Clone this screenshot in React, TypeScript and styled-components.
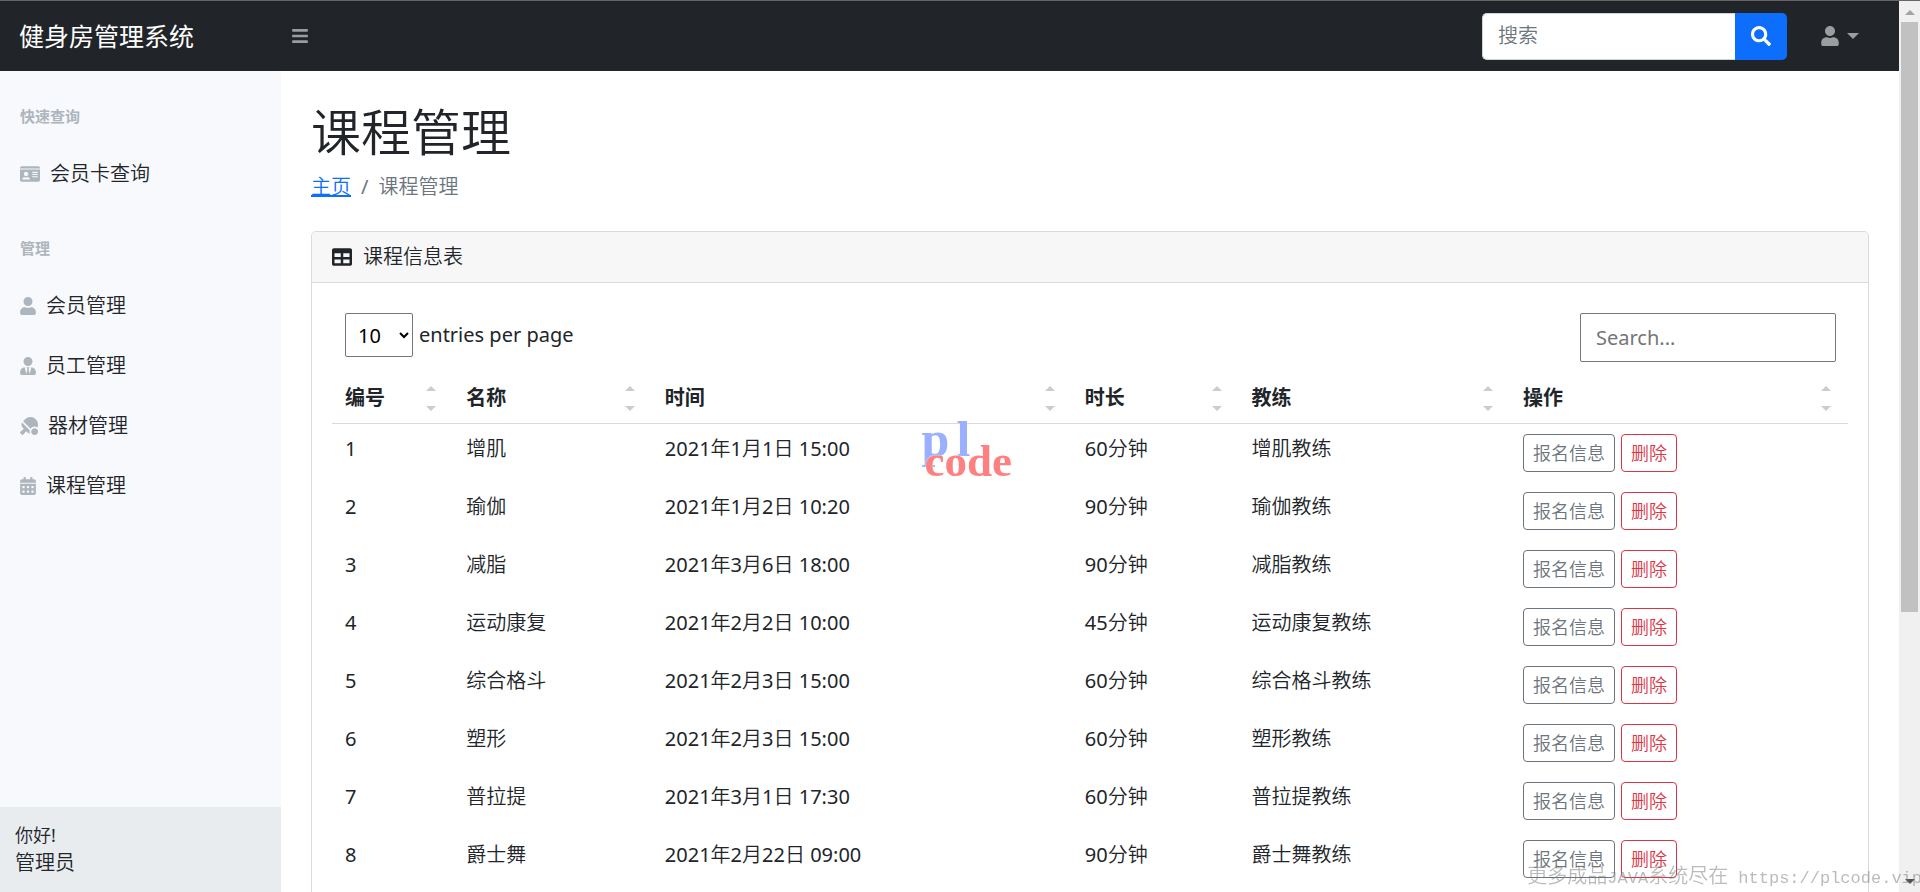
import React from 'react';
import styled, { createGlobalStyle, css } from 'styled-components';
import { FaBars, FaCalendarAlt, FaIdCard, FaSearch, FaTable, FaTableTennis, FaUser, FaUserTie } from 'react-icons/fa';

const GlobalStyle = createGlobalStyle`
  *, *::before, *::after { box-sizing: border-box; }
  body {
    margin: 0;
    background: #fff;
    color: #212529;
    font-family: "Noto Sans", "Noto Sans CJK SC DemiLight", "Noto Sans CJK SC", sans-serif;
    font-size: 20px;
    line-height: 30px;
  }
  button, input, select { font: inherit; }
`;

const Window = styled.div`
  display: flex;
  height: 100vh;
  overflow: hidden;
  border-top: 1px solid #666;
`;

const Page = styled.div`
  flex: 1;
  min-width: 0;
  display: flex;
  flex-direction: column;
`;

const TopNav = styled.header`
  display: flex;
  align-items: center;
  flex: none;
  height: 70px;
  background: #212529;
`;

const Brand = styled.a`
  width: 282px;
  padding-left: 19px;
  color: #fff;
  font-family: "Noto Sans", "Noto Sans CJK SC", sans-serif;
  font-size: 25px;
  text-decoration: none;
`;

const Icon = styled.span<{ $w: number; $h: number }>`
  display: inline-flex;
  flex: none;
  svg {
    display: block;
    width: ${(p) => p.$w}px;
    height: ${(p) => p.$h}px;
  }
`;

const NavButton = styled.button`
  display: flex;
  align-items: center;
  gap: 8px;
  padding: 10px;
  border: 0;
  background: none;
  color: #9b9d9f;
`;

const NavSearch = styled.form`
  display: flex;
  height: 47px;
  margin-left: auto;
  margin-right: 24px;
`;

const NavInput = styled.input`
  width: 253px;
  padding: 0 15px;
  border: 1px solid #ced4da;
  border-right: 0;
  border-radius: 5px 0 0 5px;
  &::placeholder { color: #6c757d; opacity: 1; }
`;

const NavSubmit = styled.button`
  display: flex;
  align-items: center;
  padding: 0 16px;
  border: 0;
  border-radius: 0 5px 5px 0;
  background: #0d6efd;
  color: #fff;
`;

const UserMenu = styled.div`
  margin-right: 30px;
`;

const Arrow = styled.span<{ $dir: 'up' | 'down'; $size?: number; $color: string }>`
  width: 0;
  height: 0;
  border: ${(p) => p.$size ?? 5}px solid transparent;
  ${(p) =>
    p.$dir === 'up'
      ? css`border-top: 0; border-bottom-color: ${p.$color};`
      : css`border-bottom: 0; border-top-color: ${p.$color};`}
`;

const Body = styled.div`
  display: flex;
  flex: 1;
  min-height: 0;
`;

const Sidebar = styled.aside`
  display: flex;
  flex-direction: column;
  width: 281px;
  flex: none;
  background: #f8f9fc;
`;

const SideNav = styled.nav`
  flex: 1;
`;

const SideHeading = styled.div`
  padding: 34px 20px 16px;
  color: #adb5bd;
  font-family: "Noto Sans", "Noto Sans CJK SC", sans-serif;
  font-size: 15px;
  font-weight: 700;
  line-height: 22px;
`;

const SideLink = styled.a`
  display: flex;
  align-items: center;
  gap: 10px;
  padding: 16px 20px 14px;
  color: #212529;
  text-decoration: none;
  ${Icon} { color: #adb5bd; }
`;

const SideFooter = styled.div`
  padding: 15px 15px 14px;
  background: #e9ecef;
`;

const Greeting = styled.div`
  font-size: 18px;
  line-height: 26px;
`;

const Main = styled.main`
  flex: 1;
  min-width: 0;
  overflow: hidden;
  padding: 31px 30px;
`;

const Title = styled.h1`
  margin: 0;
  font-size: 50px;
  font-weight: 400;
  line-height: 60px;
`;

const Breadcrumb = styled.ol`
  display: flex;
  gap: 10px;
  margin: 10px 0 29px;
  padding: 0;
  list-style: none;
  color: #6c757d;
  a { color: #0d6efd; }
`;

const Card = styled.section`
  border: 1px solid #dbdbdb;
  border-radius: 5px;
`;

const CardHeader = styled.div`
  display: flex;
  align-items: center;
  gap: 11px;
  padding: 10px 20px;
  border-bottom: 1px solid #dbdbdb;
  border-radius: 5px 5px 0 0;
  background: #f7f7f7;
`;

const CardBody = styled.div`
  padding: 20px;
`;

const TableTop = styled.div`
  display: flex;
  justify-content: space-between;
  align-items: flex-start;
  padding: 10px 12px 10px 13px;
`;

const PerPage = styled.label`
  display: flex;
  align-items: center;
  gap: 6px;
`;

const PerPageSelect = styled.select`
  width: 68px;
  height: 44px;
  padding: 0 8px;
  border: 1px solid #767676;
  border-radius: 2px;
  background: #fff;
  color: #000;
`;

const TableSearch = styled.input`
  width: 256px;
  height: 49px;
  padding: 0 15px;
  border: 1px solid #767676;
  border-radius: 2px;
  &::placeholder { color: #757575; opacity: 1; }
`;

const Table = styled.table`
  width: 100%;
  table-layout: fixed;
  border-collapse: collapse;
`;

const HeadCell = styled.th<{ $width: string }>`
  width: ${(p) => p.$width};
  padding: 11px 17px 10px 13px;
  border-bottom: 1px solid #dbdbdb;
`;

const SortButton = styled.button`
  display: flex;
  align-items: center;
  justify-content: space-between;
  width: 100%;
  padding: 0;
  border: 0;
  background: none;
  color: inherit;
  font-family: "Noto Sans", "Noto Sans CJK SC", sans-serif;
  font-weight: 700;
`;

const SortArrows = styled.span`
  display: flex;
  flex-direction: column;
  gap: 15px;
`;

const Cell = styled.td`
  padding: 10px 13px;
  vertical-align: top;
`;

const Actions = styled.div`
  display: flex;
  gap: 6px;
`;

const ActionButton = styled.button<{ $color: string }>`
  height: 38px;
  padding: 0 9px;
  border: 1px solid ${(p) => p.$color};
  border-radius: 4px;
  background: #fff;
  color: ${(p) => p.$color};
  font-size: 18px;
  line-height: 26px;
`;

const ScrollTrack = styled.div`
  display: flex;
  flex-direction: column;
  align-items: center;
  justify-content: space-between;
  flex: none;
  width: 21px;
  padding: 9px 2px 8px;
  background: #f0f0f0;
`;

const ScrollThumb = styled.div`
  width: 17px;
  height: 67.5%;
  margin: 7px 0 auto;
  background: #c1c1c1;
`;

const LogoMark = styled.div`
  position: fixed;
  top: 411px;
  left: 48%;
  pointer-events: none;
  font-family: "Liberation Serif", serif;
  font-weight: 700;
`;

const LogoTop = styled.div`
  display: flex;
  gap: 7px;
  color: #9ab0ff;
  font-size: 50px;
  line-height: 56px;
`;

const LogoBottom = styled.div`
  margin: -26px 0 0 3px;
  color: #ff8080;
  font-size: 45px;
  line-height: 40px;
  text-shadow: 0 0 2px #fff;
`;

const SiteMark = styled.div`
  position: fixed;
  right: -2px;
  bottom: -2px;
  color: rgba(120, 120, 120, 0.5);
  line-height: 30px;
  white-space: pre;
  pointer-events: none;
`;

const Mono = styled.span`
  font-family: "Liberation Mono", monospace;
  font-size: 17px;
`;

const manageLinks = [
  { label: '会员管理', icon: <FaUser />, w: 16 },
  { label: '员工管理', icon: <FaUserTie />, w: 16 },
  { label: '器材管理', icon: <FaTableTennis />, w: 18 },
  { label: '课程管理', icon: <FaCalendarAlt />, w: 16 },
];

const columns = [
  { label: '编号', width: '8%' },
  { label: '名称', width: '13.1%' },
  { label: '时间', width: '27.7%' },
  { label: '时长', width: '11%' },
  { label: '教练', width: '17.9%' },
  { label: '操作', width: '22.3%' },
];

const courses = [
  ['1', '增肌', '2021年1月1日 15:00', '60分钟', '增肌教练'],
  ['2', '瑜伽', '2021年1月2日 10:20', '90分钟', '瑜伽教练'],
  ['3', '减脂', '2021年3月6日 18:00', '90分钟', '减脂教练'],
  ['4', '运动康复', '2021年2月2日 10:00', '45分钟', '运动康复教练'],
  ['5', '综合格斗', '2021年2月3日 15:00', '60分钟', '综合格斗教练'],
  ['6', '塑形', '2021年2月3日 15:00', '60分钟', '塑形教练'],
  ['7', '普拉提', '2021年3月1日 17:30', '60分钟', '普拉提教练'],
  ['8', '爵士舞', '2021年2月22日 09:00', '90分钟', '爵士舞教练'],
];

export default function App() {
  return (
    <>
      <GlobalStyle />
      <Window>
        <Page>
          <TopNav>
            <Brand href="#">健身房管理系统</Brand>
            <NavButton type="button" aria-label="切换侧栏">
              <Icon $w={16} $h={18}><FaBars /></Icon>
            </NavButton>
            <NavSearch onSubmit={(e) => e.preventDefault()}>
              <NavInput type="text" placeholder="搜索" aria-label="搜索" />
              <NavSubmit type="submit" aria-label="提交搜索">
                <Icon $w={20} $h={20}><FaSearch /></Icon>
              </NavSubmit>
            </NavSearch>
            <UserMenu>
              <NavButton type="button" aria-label="用户菜单">
                <Icon $w={18} $h={20}><FaUser /></Icon>
                <Arrow $dir="down" $size={6} $color="#9b9d9f" />
              </NavButton>
            </UserMenu>
          </TopNav>
          <Body>
            <Sidebar>
              <SideNav>
                <SideHeading>快速查询</SideHeading>
                <SideLink href="#card">
                  <Icon $w={20} $h={18}><FaIdCard /></Icon>
                  会员卡查询
                </SideLink>
                <SideHeading>管理</SideHeading>
                {manageLinks.map((l) => (
                  <SideLink href="#" key={l.label}>
                    <Icon $w={l.w} $h={18}>{l.icon}</Icon>
                    {l.label}
                  </SideLink>
                ))}
              </SideNav>
              <SideFooter>
                <Greeting>你好!</Greeting>
                管理员
              </SideFooter>
            </Sidebar>
            <Main>
              <Title>课程管理</Title>
              <Breadcrumb>
                <li><a href="#home">主页</a></li>
                <li>/</li>
                <li>课程管理</li>
              </Breadcrumb>
              <Card>
                <CardHeader>
                  <Icon $w={20} $h={20}><FaTable /></Icon>
                  课程信息表
                </CardHeader>
                <CardBody>
                  <TableTop>
                    <PerPage>
                      <PerPageSelect defaultValue="10">
                        <option>5</option>
                        <option>10</option>
                        <option>15</option>
                      </PerPageSelect>
                      entries per page
                    </PerPage>
                    <TableSearch type="text" placeholder="Search..." aria-label="Search" />
                  </TableTop>
                  <Table>
                    <thead>
                      <tr>
                        {columns.map((c) => (
                          <HeadCell key={c.label} $width={c.width} scope="col">
                            <SortButton type="button">
                              {c.label}
                              <SortArrows>
                                <Arrow $dir="up" $color="#ccc" />
                                <Arrow $dir="down" $color="#ccc" />
                              </SortArrows>
                            </SortButton>
                          </HeadCell>
                        ))}
                      </tr>
                    </thead>
                    <tbody>
                      {courses.map((row) => (
                        <tr key={row[0]}>
                          {row.map((v, i) => <Cell key={i}>{v}</Cell>)}
                          <Cell>
                            <Actions>
                              <ActionButton type="button" $color="#6c757d">报名信息</ActionButton>
                              <ActionButton type="button" $color="#dc3545">删除</ActionButton>
                            </Actions>
                          </Cell>
                        </tr>
                      ))}
                    </tbody>
                  </Table>
                </CardBody>
              </Card>
            </Main>
          </Body>
        </Page>
        <ScrollTrack aria-hidden="true">
          <Arrow $dir="up" $color="#a3a3a3" />
          <ScrollThumb />
          <Arrow $dir="down" $color="#505050" />
        </ScrollTrack>
      </Window>
      <LogoMark aria-hidden="true">
        <LogoTop><span>p</span><span>l</span></LogoTop>
        <LogoBottom>code</LogoBottom>
      </LogoMark>
      <SiteMark>
        更多成品<Mono>JAVA</Mono>系统尽在<Mono> https://plcode.vip</Mono>
      </SiteMark>
    </>
  );
}
